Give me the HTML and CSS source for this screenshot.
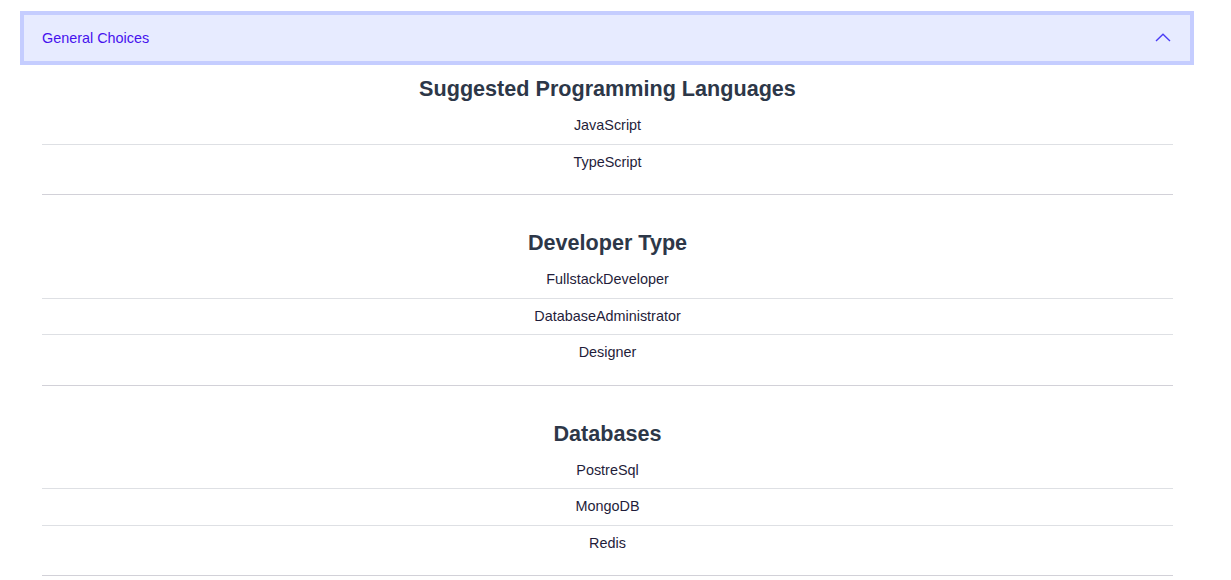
FILE: index.html
```html
<!DOCTYPE html>
<html lang="en">
<head>
<meta charset="utf-8">
<title>General Choices</title>
<link rel="stylesheet" href="styles.css">
</head>
<body>
<div class="accordion">
  <button class="acc-header" type="button">
    <span class="acc-title">General Choices</span>
    <svg class="chevron" width="16" height="9" viewBox="0 0 16 9" aria-hidden="true"><polyline points="1,8 8,1.2 15,8" fill="none" stroke="#4b3cf5" stroke-width="1.4"/></svg>
  </button>
  <div class="acc-body">
    <section class="group">
      <h2 class="group-title">Suggested Programming Languages</h2>
      <ul class="group-list">
        <li>JavaScript</li>
        <li>TypeScript</li>
      </ul>
    </section>
    <section class="group">
      <h2 class="group-title">Developer Type</h2>
      <ul class="group-list">
        <li>FullstackDeveloper</li>
        <li>DatabaseAdministrator</li>
        <li>Designer</li>
      </ul>
    </section>
    <section class="group">
      <h2 class="group-title">Databases</h2>
      <ul class="group-list">
        <li>PostreSql</li>
        <li>MongoDB</li>
        <li>Redis</li>
      </ul>
    </section>
  </div>
</div>
</body>
</html>
```

FILE: styles.css
```css
html, body {
  margin: 0;
  padding: 0;
  background: #ffffff;
}
body {
  font-family: "Liberation Sans", Arial, sans-serif;
  padding: 15px 0 0 24px;
}
.accordion {
  width: 1166px;
}
.acc-header {
  display: flex;
  align-items: center;
  justify-content: space-between;
  width: 100%;
  height: 46px;
  margin: 0;
  padding: 0 19px 0 18px;
  border: 0;
  background: #e7ebff;
  box-shadow: 0 0 0 4px #c5cdff;
  font-family: "Liberation Sans", Arial, sans-serif;
  font-size: 14.4px;
  color: #4612ee;
  cursor: pointer;
}
.chevron {
  display: block;
  margin-top: -1px;
}
.acc-body {
  padding: 15px 17px 0 18px;
}
.group {
  border-bottom: 1px solid #d2d1d8;
  padding-bottom: 14px;
}
.group + .group {
  margin-top: 35px;
}
.group-title {
  margin: 0 0 6px;
  font-size: 21.6px;
  line-height: 26px;
  font-weight: bold;
  text-align: center;
  color: #2d3748;
}
.group-list {
  list-style: none;
  margin: 0;
  padding: 0;
}
.group-list li {
  padding: 8px 0;
  line-height: 19.5px;
  font-size: 14.4px;
  text-align: center;
  color: #1f1d3a;
  border-bottom: 1px solid #dee0e4;
}
.group-list li:last-child {
  border-bottom: 0;
}
```
